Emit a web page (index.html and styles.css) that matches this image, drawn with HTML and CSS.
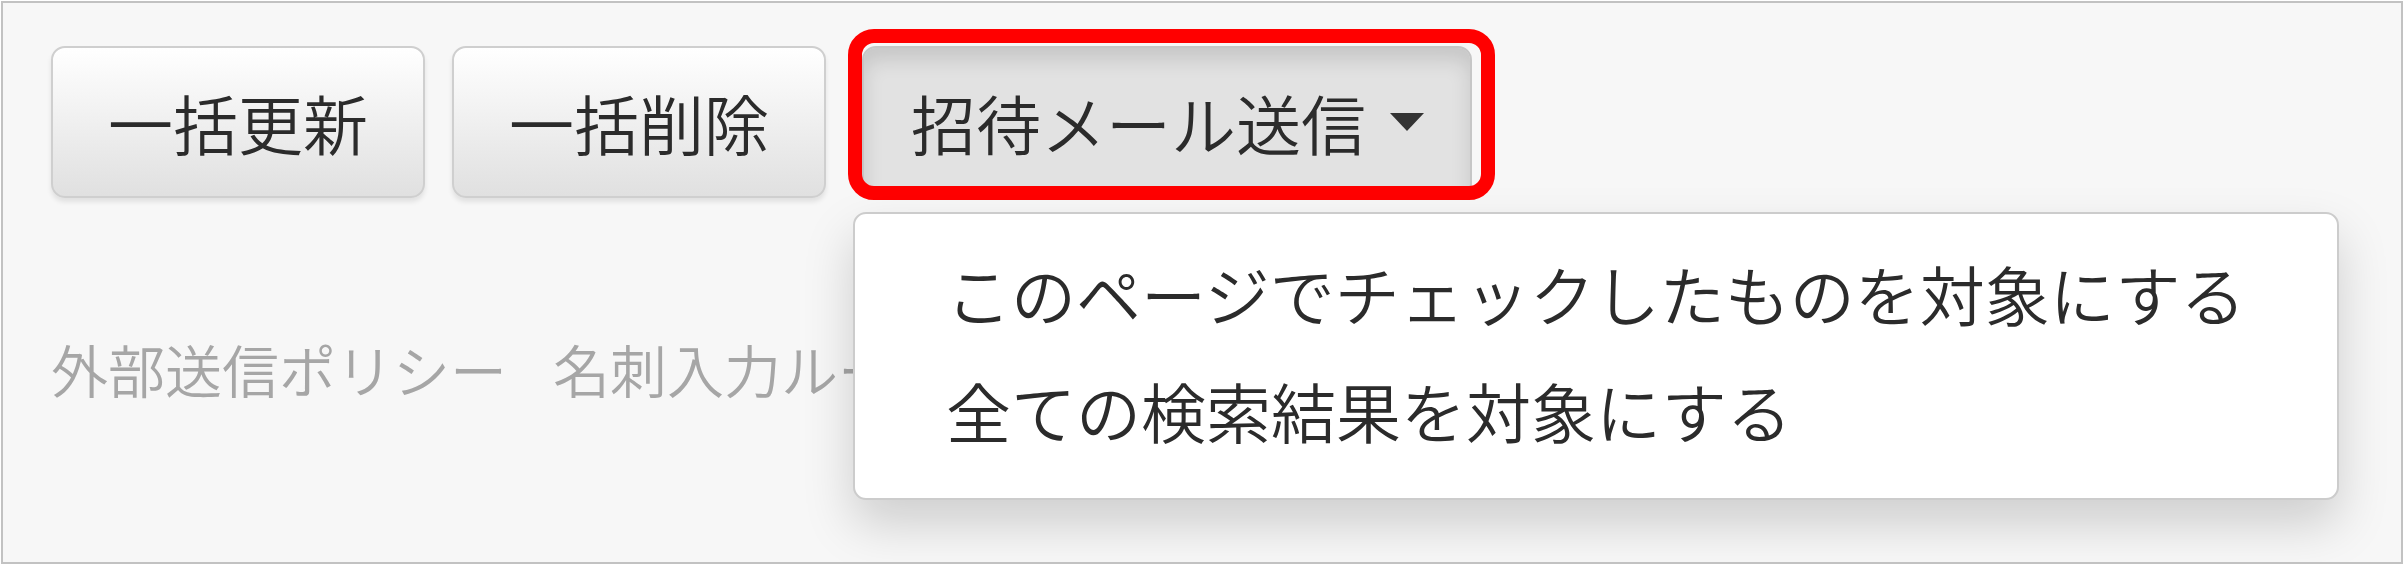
FILE: index.html
```html
<!DOCTYPE html>
<html lang="ja">
<head>
<meta charset="utf-8">
<title>招待メール送信</title>
<link rel="stylesheet" href="styles.css">
</head>
<body>
<div class="frame">
  <div class="toolbar">
    <button class="btn btn-update">一括更新</button>
    <button class="btn btn-delete">一括削除</button>
    <div class="dropdown">
      <button class="btn btn-open">招待メール送信<span class="caret"></span></button>
      <div class="highlight"></div>
      <ul class="menu">
        <li class="menu-item">このページでチェックしたものを対象にする</li>
        <li class="menu-item">全ての検索結果を対象にする</li>
      </ul>
    </div>
  </div>
  <div class="links">
    <span class="link">外部送信ポリシー</span>
    <span class="link">名刺入力ルール</span>
  </div>
</div>
</body>
</html>
```

FILE: styles.css
```css
html, body {
  margin: 0;
  padding: 0;
  background: #ffffff;
}

.frame {
  box-sizing: border-box;
  width: 2402px;
  height: 563px;
  margin: 1px;
  border: 2px solid #c2c2c2;
  background: #f7f7f7;
  padding: 43px 0 0 48px;
  overflow: hidden;
  font-family: "Noto Sans CJK JP", "Noto Sans", sans-serif;
  font-weight: 350;
}

.toolbar {
  display: flex;
  align-items: flex-start;
}

.btn {
  box-sizing: border-box;
  height: 152px;
  display: flex;
  align-items: center;
  margin: 0;
  padding: 0 55px;
  font-family: "Noto Sans CJK JP", "Noto Sans", sans-serif;
  font-size: 65px;
  font-weight: 350;
  line-height: 1;
  color: #2b2b2b;
  border: 2px solid #cfcfcf;
  border-radius: 14px;
  background: linear-gradient(to bottom, #ffffff 0%, #e0e0e0 100%);
  box-shadow: 0 4px 5px rgba(0, 0, 0, 0.09);
  cursor: pointer;
}

.btn-update {
  margin-right: 27px;
}

.btn-delete {
  margin-right: 36px;
}

.dropdown {
  position: relative;
}

.btn-open {
  padding: 0 46px 0 47px;
  background: #e2e2e2;
  border-color: #c6c6c6;
  box-shadow: inset 0 12px 20px rgba(0, 0, 0, 0.12);
}

.caret {
  display: inline-block;
  width: 0;
  height: 0;
  margin-left: 24px;
  border-top: 18px solid #333333;
  border-left: 17px solid transparent;
  border-right: 17px solid transparent;
}

.highlight {
  position: absolute;
  left: -14px;
  top: -17px;
  width: 647px;
  height: 171px;
  box-sizing: border-box;
  border: 14px solid #ff0000;
  border-radius: 26px;
  pointer-events: none;
}

.menu {
  position: absolute;
  left: -9px;
  top: 166px;
  box-sizing: border-box;
  width: 1486px;
  height: 288px;
  margin: 0;
  padding: 21px 0 27px;
  list-style: none;
  background: #ffffff;
  border: 2px solid #cccccc;
  border-radius: 13px;
  box-shadow: 0 24px 50px rgba(0, 0, 0, 0.17);
  z-index: 2;
}

.menu-item {
  height: 117px;
  line-height: 117px;
  padding: 0 0 0 91px;
  font-size: 65px;
  color: #2b2b2b;
  white-space: nowrap;
}

.links {
  display: flex;
  gap: 46px;
  margin-top: 130px;
  font-size: 57px;
  line-height: 80px;
  color: #a6a6a6;
  white-space: nowrap;
}
```
